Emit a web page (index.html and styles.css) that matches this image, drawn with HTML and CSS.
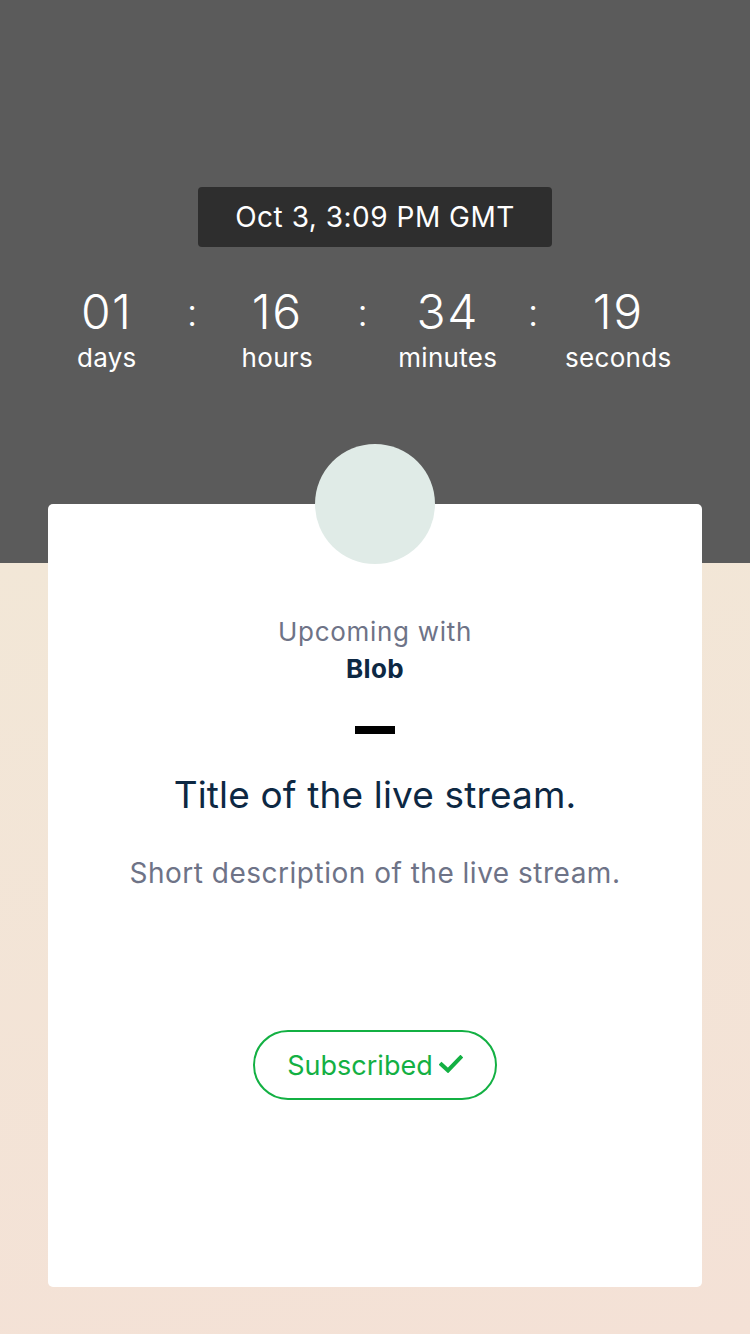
FILE: index.html
```html
<!DOCTYPE html>
<html lang="en">
<head>
<meta charset="utf-8">
<title>Upcoming live stream</title>
<link rel="stylesheet" href="styles.css">
</head>
<body>
<div class="page">
  <header class="hero">
    <div class="date-pill">Oct 3, 3:09 PM GMT</div>
    <div class="countdown">
      <div class="unit"><span class="num">01</span><span class="label">days</span></div>
      <div class="sep">:</div>
      <div class="unit"><span class="num">16</span><span class="label">hours</span></div>
      <div class="sep">:</div>
      <div class="unit"><span class="num">34</span><span class="label">minutes</span></div>
      <div class="sep">:</div>
      <div class="unit"><span class="num">19</span><span class="label">seconds</span></div>
    </div>
  </header>
  <main class="lower">
    <section class="card">
      <div class="avatar"></div>
      <p class="upcoming">Upcoming with</p>
      <p class="host">Blob</p>
      <div class="dash"></div>
      <h1 class="title">Title of the live stream.</h1>
      <p class="desc">Short description of the live stream.</p>
      <button class="subscribed">Subscribed
        <svg class="check" width="24" height="18" viewBox="0 0 24 18"><path d="M2.5 9.5 L9 15.5 L21.5 2.5" fill="none" stroke="#13b043" stroke-width="4" stroke-linecap="square" stroke-linejoin="miter"/></svg>
      </button>
    </section>
  </main>
</div>
</body>
</html>
```

FILE: styles.css
```css
* { box-sizing: border-box; }
html, body { margin: 0; padding: 0; }
body {
  width: 750px;
  height: 1334px;
  overflow: hidden;
  font-family: Inter, "Noto Sans", "Liberation Sans", sans-serif;
  background: #f4e2d6;
}
.page { display: flex; flex-direction: column; height: 1334px; }

.hero {
  background: #5b5b5b;
  height: 563px;
  padding-top: 187px;
  display: flex;
  flex-direction: column;
  align-items: center;
}
.date-pill {
  width: 354px;
  height: 60px;
  background: #2e2e2e;
  border-radius: 4px;
  color: #fff;
  font-size: 28px;
  letter-spacing: 0.5px;
  line-height: 60px;
  text-align: center;
}
.countdown {
  display: flex;
  margin-top: 38px;
  margin-right: 25px;
  color: #fff;
}
.unit {
  width: 130px;
  display: flex;
  flex-direction: column;
  align-items: center;
}
.num {
  font-size: 48px;
  font-weight: 300;
  letter-spacing: 1.5px;
  line-height: 54px;
}
.label {
  font-size: 26px;
  letter-spacing: 0.3px;
  line-height: 30px;
  margin-top: 4px;
}
.sep {
  width: 40.5px;
  text-align: center;
  font-size: 38px;
  font-weight: 300;
  line-height: 54px;
}

.lower {
  flex: 1;
  background: linear-gradient(170deg, #f2e7d7 0%, #f4e1d6 100%);
  padding: 0 48px;
}
.card {
  margin-top: -59px;
  height: 783px;
  background: #fff;
  border-radius: 5px;
  display: flex;
  flex-direction: column;
  align-items: center;
}
.avatar {
  width: 120px;
  height: 120px;
  border-radius: 50%;
  background: #e0ebe7;
  margin-top: -60px;
}
.upcoming {
  margin: 52px 0 0;
  font-size: 26px;
  letter-spacing: 0.7px;
  line-height: 32px;
  color: #6e7387;
}
.host {
  margin: 5px 0 0;
  font-size: 26px;
  letter-spacing: 0.3px;
  line-height: 32px;
  font-weight: 700;
  color: #0d2843;
}
.dash {
  width: 40px;
  height: 8px;
  background: #000;
  margin-top: 41px;
}
.title {
  margin: 39px 0 0;
  font-size: 37px;
  letter-spacing: 0.15px;
  font-weight: 400;
  line-height: 44px;
  color: #0d2843;
}
.desc {
  margin: 39px 0 0;
  font-size: 28px;
  letter-spacing: 0.5px;
  line-height: 34px;
  color: #6e7387;
}
.subscribed {
  margin-top: 140px;
  width: 244px;
  height: 70px;
  border: 2px solid #13b043;
  border-radius: 35px;
  background: #fff;
  color: #13b043;
  font-family: inherit;
  font-size: 27px;
  display: flex;
  align-items: center;
  justify-content: center;
  gap: 6px;
  padding: 0;
}
.check { display: block; margin-top: -2px; }
```
